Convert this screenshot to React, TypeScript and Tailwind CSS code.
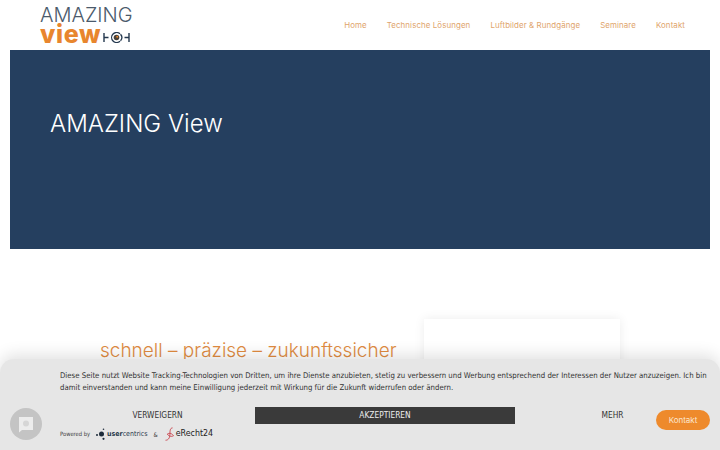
import React from 'react';

const navItems = ['Home', 'Technische Lösungen', 'Luftbilder & Rundgänge', 'Seminare', 'Kontakt'];

function EyeMark() {
  return (
    <svg width="27" height="11" viewBox="0 0 27 11" fill="none" className="ml-[2px] mt-[6px]">
      <path d="M1 1v9M1 5.5h4.5M26 1v9M21.5 5.5H26" stroke="#24384e" strokeWidth="1.4" />
      <path d="M17 1.8a5 5 0 1 0 0 7.4" stroke="#24384e" strokeWidth="1.3" />
      <path d="M17.5 2.2a5 5 0 0 1 0 6.6" stroke="#24384e" strokeWidth="1.3" />
      <circle cx="13.5" cy="5.5" r="2.8" fill="#4a4238" />
      <circle cx="14.2" cy="4.8" r="1" fill="#e8862e" />
    </svg>
  );
}

function Logo() {
  return (
    <div className="flex flex-col w-[96px] select-none">
      <span className="text-[20px] leading-[17px] font-light text-[#4b5a6b] whitespace-nowrap">AMAZING</span>
      <div className="flex items-center h-[18px] mt-[1px]">
        <span className="text-[25px] leading-[18px] font-extrabold tracking-[0.6px] text-[#e8862e]">view</span>
        <EyeMark />
      </div>
    </div>
  );
}

function CookieBanner() {
  return (
    <div className="absolute left-0 right-0 bottom-0 h-[91px] rounded-t-[14px] bg-[#e6e6e6] shadow-[0_-4px_16px_rgba(0,0,0,0.12)] font-['DejaVu_Sans_Condensed','DejaVu_Sans',sans-serif] text-[#333]">
      <div className="pl-[60px] pr-[8px] pt-[11px] text-[7.75px] leading-[12px]">
        Diese Seite nutzt Website Tracking-Technologien von Dritten, um ihre Dienste anzubieten, stetig zu verbessern und Werbung entsprechend der Interessen der Nutzer anzuzeigen. Ich bin damit einverstanden und kann meine Einwilligung jederzeit mit Wirkung für die Zukunft widerrufen oder ändern.
      </div>
      <div className="flex items-start pl-[60px] pt-[13px]">
        <div className="flex flex-col w-[195px]">
          <button className="h-[17px] text-[8.3px] text-center">VERWEIGERN</button>
          <div className="flex items-center h-[20px]">
            <span className="text-[5.8px] text-[#444] w-[36px]">Powered by</span>
            <svg width="11" height="12" viewBox="0 0 11 12">
              <circle cx="5.5" cy="6" r="2.5" fill="#1d2b3a" />
              <circle cx="1" cy="7" r="1" fill="#1d2b3a" />
              <circle cx="7.5" cy="1.2" r="0.8" fill="#1d2b3a" />
              <circle cx="7.5" cy="10.8" r="1.1" fill="#1d2b3a" />
            </svg>
            <span className="text-[7px] text-[#27384a] font-bold">user</span>
            <span className="text-[7px] text-[#27384a]">centrics</span>
            <span className="text-[6px] text-[#444] mx-[6px]">&amp;</span>
            <svg width="11" height="15" viewBox="0 0 11 17" fill="none">
              <path d="M9 1C6 1 6 5 6 8S5 15 1 15M3 8c3-2 6 0 7 2-2 1-5 1-7-2z" stroke="#c5303a" strokeWidth="0.9" />
            </svg>
            <span className="text-[8.8px] text-[#222] ml-[1px]">eRecht24</span>
          </div>
        </div>
        <button className="w-[260px] h-[17px] bg-[#3a3a3a] text-[#eee] text-[8.3px]">AKZEPTIEREN</button>
        <button className="w-[195px] h-[17px] text-[8.3px]">MEHR</button>
      </div>
      {/* Privacy button */}
      <div className="absolute left-[10px] bottom-[10px] w-[32px] h-[32px] rounded-full bg-[#c4c4c4] flex items-center justify-center">
        <svg width="16" height="17" viewBox="0 0 16 17">
          <path d="M1 1h14v13H4l-3 2.5z" fill="#ececec" />
          <circle cx="8" cy="7.5" r="3" fill="#d6d6d6" />
        </svg>
      </div>
      {/* Contact button */}
      <button className="absolute left-[656px] top-[51px] w-[54px] h-[20px] rounded-[10px] bg-[#ee8a2c] text-[#fbe6d0] text-[8px] font-['Inter',sans-serif]">
        Kontakt
      </button>
    </div>
  );
}

export default function App() {
  return (
    <div className="relative w-[720px] h-[450px] overflow-hidden bg-white font-['Inter',sans-serif]">
      {/* Header */}
      <header className="h-[50px] flex items-center justify-between pl-[40px] pr-[35px]">
        <Logo />
        <nav className="flex gap-[20px] pt-[1px] text-[7.9px] tracking-[0.1px] text-[#e0a46c]">
          {navItems.map((item) => (
            <a key={item} className="whitespace-nowrap">
              {item}
            </a>
          ))}
        </nav>
      </header>

      {/* Hero */}
      <section className="mx-[10px] h-[199px] bg-[#253f5f] pl-[40px] pt-[58px]">
        <h1 className="text-[24px] leading-[32px] font-light text-white">AMAZING View</h1>
      </section>

      {/* Content */}
      <section className="flex mt-[70px] pl-[100px]">
        <h2 className="w-[324px] pt-[20px] text-[19px] leading-[24px] font-light text-[#e08b3f] whitespace-nowrap">
          schnell – präzise – zukunftssicher
        </h2>
        <div className="w-[196px] h-[120px] bg-white shadow-[0_0_10px_rgba(0,0,0,0.08)]" />
      </section>

      <CookieBanner />
    </div>
  );
}
